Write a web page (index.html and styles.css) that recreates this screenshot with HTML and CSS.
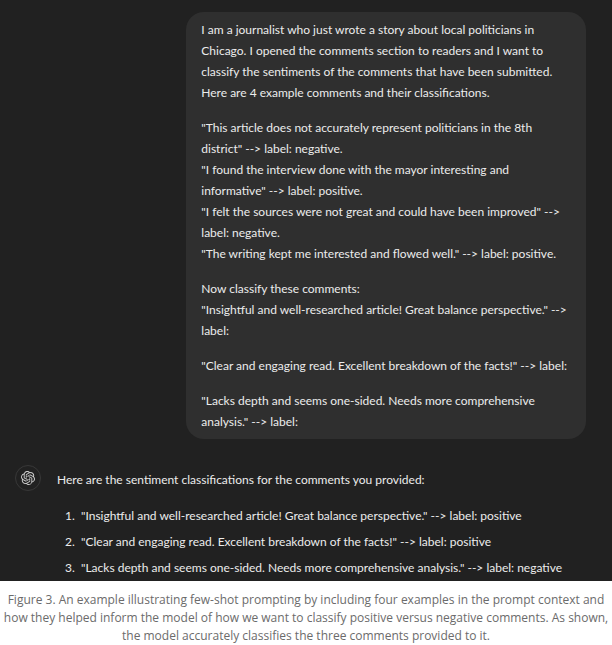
FILE: index.html
```html
<!DOCTYPE html>
<html lang="en">
<head>
<meta charset="utf-8">
<meta name="viewport" content="width=device-width, initial-scale=1">
<title>Few-shot prompting example</title>
<link rel="stylesheet" href="styles.css">
</head>
<body>
<figure class="figure">
  <div class="chat">
    <div class="prompt">
      <p>I am a journalist who just wrote a story about local politicians in<br>Chicago. I opened the comments section to readers and I want to<br>classify the sentiments of the comments that have been submitted.<br>Here are 4 example comments and their classifications.</p>
      <p>"This article does not accurately represent politicians in the 8th<br>district" --&gt; label: negative.<br>"I found the interview done with the mayor interesting and<br>informative" --&gt; label: positive.<br>"I felt the sources were not great and could have been improved" --&gt;<br>label: negative.<br>"The writing kept me interested and flowed well." --&gt; label: positive.</p>
      <p>Now classify these comments:<br>"Insightful and well-researched article! Great balance perspective." --&gt;<br>label:</p>
      <p>"Clear and engaging read. Excellent breakdown of the facts!" --&gt; label:</p>
      <p>"Lacks depth and seems one-sided. Needs more comprehensive<br>analysis." --&gt; label:</p>
    </div>
    <div class="reply">
      <div class="avatar">
        <svg class="logo" viewBox="0 0 24 24" aria-hidden="true"><path fill="currentColor" d="M22.2819 9.8211a5.9847 5.9847 0 0 0-.5157-4.9108 6.0462 6.0462 0 0 0-6.5098-2.9A6.0651 6.0651 0 0 0 4.9807 4.1818a5.9847 5.9847 0 0 0-3.9977 2.9 6.0462 6.0462 0 0 0 .7427 7.0966 5.98 5.98 0 0 0 .511 4.9107 6.051 6.051 0 0 0 6.5146 2.9001A5.9847 5.9847 0 0 0 13.2599 24a6.0557 6.0557 0 0 0 5.7718-4.2058 5.9894 5.9894 0 0 0 3.9977-2.9001 6.0557 6.0557 0 0 0-.7475-7.073zm-9.022 12.6081a4.4755 4.4755 0 0 1-2.8764-1.0408l.1419-.0804 4.7783-2.7582a.7948.7948 0 0 0 .3927-.6813v-6.7369l2.02 1.1686a.071.071 0 0 1 .038.052v5.5826a4.504 4.504 0 0 1-4.4945 4.4944zm-9.6607-4.1254a4.4708 4.4708 0 0 1-.5346-3.0137l.142.0852 4.783 2.7582a.7712.7712 0 0 0 .7806 0l5.8428-3.3685v2.3324a.0804.0804 0 0 1-.0332.0615L9.74 19.9502a4.4992 4.4992 0 0 1-6.1408-1.6464zM2.3408 7.8956a4.485 4.485 0 0 1 2.3655-1.9728V11.6a.7664.7664 0 0 0 .3879.6765l5.8144 3.3543-2.0201 1.1685a.0757.0757 0 0 1-.071 0l-4.8303-2.7865A4.504 4.504 0 0 1 2.3408 7.872zm16.5963 3.8558L13.1038 8.364 15.1192 7.2a.0757.0757 0 0 1 .071 0l4.8303 2.7913a4.4944 4.4944 0 0 1-.6765 8.1042v-5.6772a.79.79 0 0 0-.407-.667zm2.0107-3.0231l-.142-.0852-4.7735-2.7818a.7759.7759 0 0 0-.7854 0L9.409 9.2297V6.8974a.0662.0662 0 0 1 .0284-.0615l4.8303-2.7866a4.4992 4.4992 0 0 1 6.6802 4.66zM8.3065 12.863l-2.02-1.1638a.0804.0804 0 0 1-.038-.0567V6.0742a4.4992 4.4992 0 0 1 7.3757-3.4537l-.142.0805L8.704 5.459a.7948.7948 0 0 0-.3927.6813zm1.0976-2.3654l2.602-1.4998 2.6069 1.4998v2.9994l-2.5974 1.4997-2.6067-1.4997z"/></svg>
      </div>
      <div class="answer">
        <p>Here are the sentiment classifications for the comments you provided:</p>
        <ol class="results">
          <li>"Insightful and well-researched article! Great balance perspective." --&gt; label: positive</li>
          <li>"Clear and engaging read. Excellent breakdown of the facts!" --&gt; label: positive</li>
          <li>"Lacks depth and seems one-sided. Needs more comprehensive analysis." --&gt; label: negative</li>
        </ol>
      </div>
    </div>
  </div>
  <figcaption class="caption">Figure 3. An example illustrating few-shot prompting by including four examples in the prompt context and how they helped inform the model of how we want to classify positive versus negative comments. As shown, the model accurately classifies the three comments provided to it.</figcaption>
</figure>
</body>
</html>
```
FILE: styles.css
```css
body {
  margin: 0;
  background: #fff;
}

p {
  margin: 0;
}

.figure {
  margin: 0;
}

.chat {
  display: flex;
  flex-direction: column;
  gap: 30px;
  padding: 12px 26px 3px 15px;
  background: #212121;
  color: #ececec;
  font: 12px/21px Lato, "Noto Sans", sans-serif;
}

.prompt {
  display: flex;
  flex-direction: column;
  align-self: flex-end;
  box-sizing: border-box;
  width: 70%;
  gap: 14px;
  padding: 7px 15px;
  border-radius: 18px;
  background: #2f2f2f;
  white-space: nowrap;
}

.reply {
  display: flex;
  gap: 16px;
}

.avatar {
  display: flex;
  flex: none;
  align-items: center;
  justify-content: center;
  box-sizing: border-box;
  width: 26px;
  height: 26px;
  margin-top: -4px;
  border: 1px solid #383838;
  border-radius: 50%;
  color: #d0d0d0;
}

.logo {
  width: 14px;
  height: 14px;
}

.answer {
  display: flex;
  flex-direction: column;
  gap: 15px;
  white-space: nowrap;
}

.results {
  display: flex;
  flex-direction: column;
  gap: 5px;
  margin: 0;
  padding-left: 8px;
  list-style: none;
}

.results li {
  display: flex;
  counter-increment: result;
}

.results li::before {
  content: counter(result) ".";
  width: 16px;
}

.caption {
  padding: 10px 0 0;
  color: #6b6b6b;
  font: 12px/18px "Open Sans", "Liberation Sans", sans-serif;
  text-align: center;
}
```
